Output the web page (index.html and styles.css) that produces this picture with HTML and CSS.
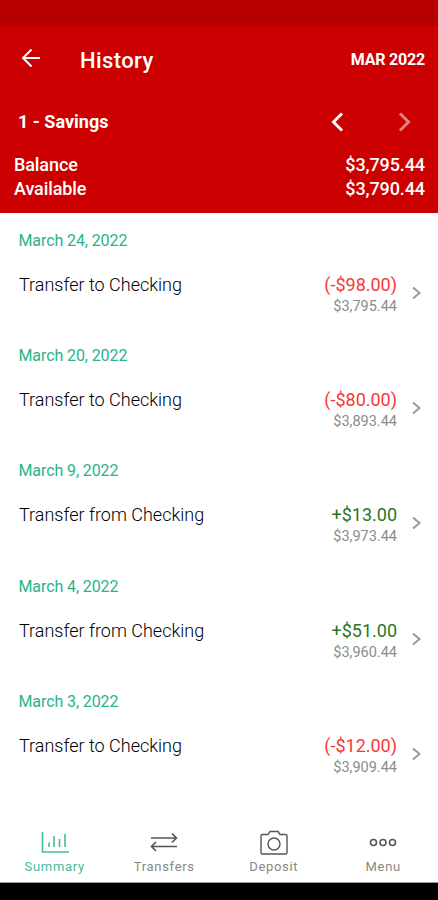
FILE: index.html
```html
<!DOCTYPE html>
<html lang="en">
<head>
    <meta charset="UTF-8">
    <meta name="viewport" content="width=device-width, initial-scale=1.0">
    <title>History</title>
    <link rel="stylesheet" href="styles.css">
</head>
<body>
    <header class="header">
        <div class="status-bar"></div>
        <div class="app-bar">
            <svg class="back" width="20" height="20" viewBox="0 0 20 20"><path d="M19 10H2.500M10.500 1.500L2 10L10.500 18.500"/></svg>
            <h1 class="title">History</h1>
            <span class="month">MAR 2022</span>
        </div>
        <div class="account">
            <span class="account-name">1 - Savings</span>
            <svg class="arrow" width="14" height="20" viewBox="0 0 14 20"><path d="M12 1.500L3.500 10L12 18.500"/></svg>
            <svg class="arrow disabled" width="14" height="20" viewBox="0 0 14 20"><path d="M2 1.500L10.500 10L2 18.500"/></svg>
        </div>
        <div class="balances">
            <div class="balance-row"><span>Balance</span><span>$3,795.44</span></div>
            <div class="balance-row"><span>Available</span><span>$3,790.44</span></div>
        </div>
    </header>

    <main class="list">
        <section class="day">
            <h2 class="date">March 24, 2022</h2>
            <div class="entry">
                <span class="name">Transfer to Checking</span>
                <div class="amounts">
                    <span class="amount debit">(-$98.00)</span>
                    <span class="running">$3,795.44</span>
                </div>
                <svg class="chevron" width="9" height="14" viewBox="0 0 9 14"><path d="M1 1.5L7.5 7L1 12.5"/></svg>
            </div>
        </section>
        <section class="day">
            <h2 class="date">March 20, 2022</h2>
            <div class="entry">
                <span class="name">Transfer to Checking</span>
                <div class="amounts">
                    <span class="amount debit">(-$80.00)</span>
                    <span class="running">$3,893.44</span>
                </div>
                <svg class="chevron" width="9" height="14" viewBox="0 0 9 14"><path d="M1 1.5L7.5 7L1 12.5"/></svg>
            </div>
        </section>
        <section class="day">
            <h2 class="date">March 9, 2022</h2>
            <div class="entry">
                <span class="name">Transfer from Checking</span>
                <div class="amounts">
                    <span class="amount credit">+$13.00</span>
                    <span class="running">$3,973.44</span>
                </div>
                <svg class="chevron" width="9" height="14" viewBox="0 0 9 14"><path d="M1 1.5L7.5 7L1 12.5"/></svg>
            </div>
        </section>
        <section class="day">
            <h2 class="date">March 4, 2022</h2>
            <div class="entry">
                <span class="name">Transfer from Checking</span>
                <div class="amounts">
                    <span class="amount credit">+$51.00</span>
                    <span class="running">$3,960.44</span>
                </div>
                <svg class="chevron" width="9" height="14" viewBox="0 0 9 14"><path d="M1 1.5L7.5 7L1 12.5"/></svg>
            </div>
        </section>
        <section class="day">
            <h2 class="date">March 3, 2022</h2>
            <div class="entry">
                <span class="name">Transfer to Checking</span>
                <div class="amounts">
                    <span class="amount debit">(-$12.00)</span>
                    <span class="running">$3,909.44</span>
                </div>
                <svg class="chevron" width="9" height="14" viewBox="0 0 9 14"><path d="M1 1.5L7.5 7L1 12.5"/></svg>
            </div>
        </section>
    </main>

    <nav class="tabs">
        <a class="tab active">
            <svg width="30" height="26" viewBox="0 0 30 26"><path d="M2.500 2V22H29M9 12.500V17M14 6V17M19.500 9V17M25 4V17"/></svg>
            <span>Summary</span>
        </a>
        <a class="tab">
            <svg width="30" height="26" viewBox="0 0 30 26"><path d="M2 8H27.500M23 3.500L27.500 8L23 12.500M28 16.500H2.500M7 12L2.500 16.500L7 21"/></svg>
            <span>Transfers</span>
        </a>
        <a class="tab">
            <svg class="thin" width="30" height="26" viewBox="0 0 30 26"><path d="M3.500 4.500H9L11 1.500H19L21 4.500H26.500Q28 4.500 28 6V22.500Q28 24 26.500 24H3.500Q2 24 2 22.500V6Q2 4.500 3.500 4.500Z"/><circle cx="15" cy="14" r="6"/></svg>
            <span>Deposit</span>
        </a>
        <a class="tab">
            <svg width="30" height="26" viewBox="0 0 30 26"><circle cx="5.500" cy="12.500" r="3"/><circle cx="15" cy="12.500" r="3"/><circle cx="24.500" cy="12.500" r="3"/></svg>
            <span>Menu</span>
        </a>
    </nav>
    <div class="system-bar"></div>
</body>
</html>
```
FILE: styles.css
```css
* {
    box-sizing: border-box;
}
body {
    margin: 0;
    height: 900px;
    display: flex;
    flex-direction: column;
    overflow: hidden;
    background: #fff;
    font-family: Roboto, "Liberation Sans", sans-serif;
}
svg {
    display: block;
    flex: none;
    fill: none;
    stroke: currentColor;
    stroke-width: 2;
}
h1, h2 {
    margin: 0;
}
.header {
    height: 213px;
    background: #cc0000;
    color: #fff;
}
.status-bar {
    height: 26px;
    background: #b90000;
}
.app-bar {
    display: flex;
    align-items: center;
    height: 67px;
    padding: 0 13px 0 21px;
}
.back {
    margin-bottom: 3px;
}
.title {
    flex: 1;
    padding: 1px 0 0 39px;
    font-size: 22px;
    font-weight: 500;
    letter-spacing: 0.4px;
}
.month {
    font-size: 16px;
    font-weight: 700;
    letter-spacing: -0.2px;
}
.account {
    display: flex;
    align-items: center;
    height: 57px;
    padding: 0 26px 0 18px;
}
.account-name {
    flex: 1;
    font-size: 18px;
    font-weight: 700;
}
.arrow {
    stroke-width: 3;
}
.arrow.disabled {
    margin-left: 54px;
    opacity: 0.5;
}
.balances {
    padding: 3px 13px 0 14px;
    font-size: 18px;
    font-weight: 500;
    line-height: 24px;
    letter-spacing: -0.1px;
}
.balance-row {
    display: flex;
    justify-content: space-between;
}
.list {
    flex: 1;
}
.day {
    height: 115.2px;
    padding: 18px 17px 0 18px;
}
.date {
    padding-left: 0.5px;
    color: #2ab38b;
    font-size: 16px;
    font-weight: 400;
    line-height: 20px;
    letter-spacing: -0.1px;
}
.entry {
    display: flex;
    margin-top: 23px;
}
.name {
    flex: 1;
    padding-left: 1px;
    color: #000;
    font-size: 18px;
    font-weight: 300;
    line-height: 22px;
}
.amounts {
    display: flex;
    flex-direction: column;
    align-items: flex-end;
    line-height: 22px;
}
.amount {
    font-size: 18px;
}
.debit {
    color: #f83838;
}
.credit {
    color: #2a762a;
}
.running {
    color: #8c8c8c;
    font-size: 14.5px;
}
.chevron {
    margin: 12px 0 0 15px;
    color: #999;
}
.tabs {
    display: flex;
    height: 58px;
    border-bottom: 1px solid #999;
}
.tab {
    flex: 1;
    display: flex;
    flex-direction: column;
    align-items: center;
    padding-top: 5px;
    color: #888;
    font-size: 13px;
    line-height: 22px;
    letter-spacing: 0.7px;
}
.tab svg {
    color: #555;
    stroke-width: 1.6;
}
.tab .thin {
    stroke-width: 1.4;
}
.active, .active svg {
    color: #45bd9a;
}
.system-bar {
    height: 17px;
    background: #000;
}
```
